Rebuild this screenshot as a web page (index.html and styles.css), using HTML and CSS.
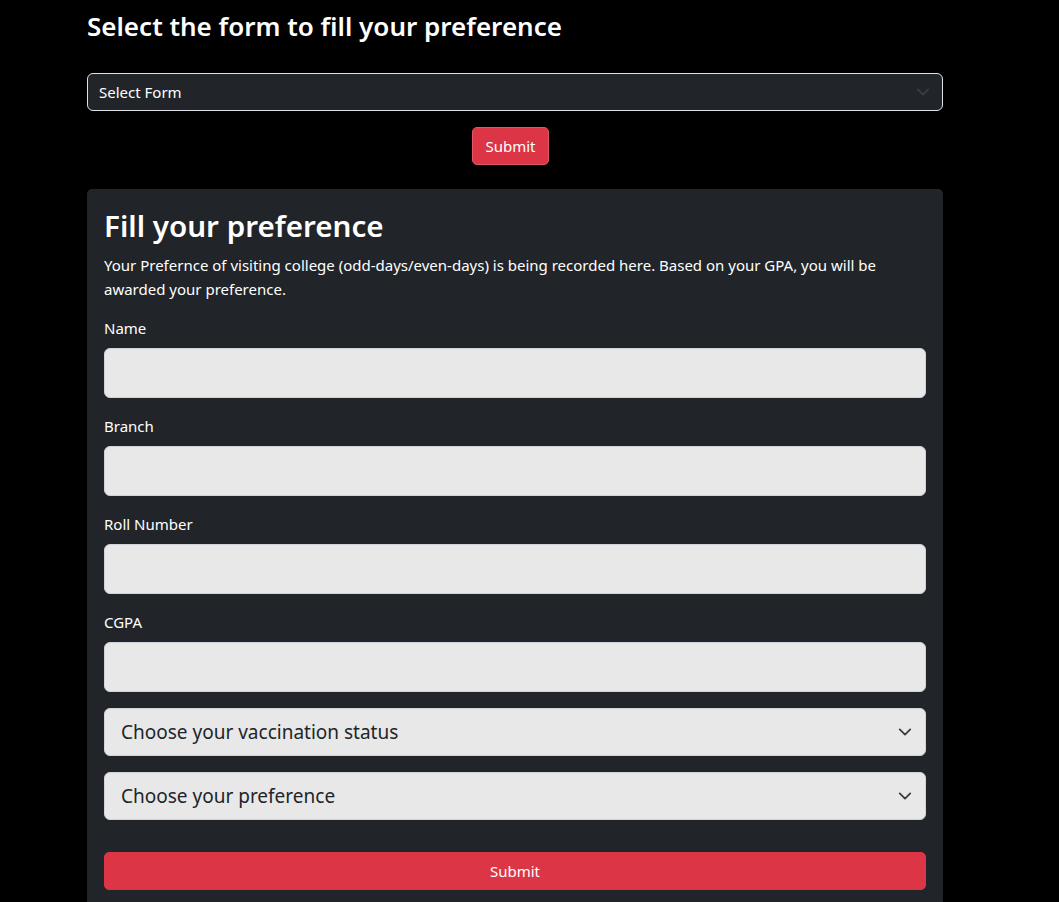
FILE: index.html
```html
<!DOCTYPE html>
<html lang="en">
<head>
<meta charset="utf-8">
<title>Fill your preference</title>
<link rel="stylesheet" href="styles.css">
</head>
<body>
<main class="page">
  <h2 class="page-title">Select the form to fill your preference</h2>
  <div class="form-select-wrap">
    <div class="select-dark">
      <span>Select Form</span>
      <svg class="chev chev-dim" viewBox="0 0 16 16" width="16" height="16"><path d="M2 5l6 6 6-6" fill="none" stroke="currentColor" stroke-width="2" stroke-linecap="round" stroke-linejoin="round"/></svg>
    </div>
  </div>
  <div class="center-row">
    <button class="btn btn-danger">Submit</button>
  </div>

  <section class="card">
    <h1 class="card-title">Fill your preference</h1>
    <p class="lead-text">Your Prefernce of visiting college (odd-days/even-days) is being recorded here. Based on your GPA, you will be awarded your preference.</p>

    <div class="field">
      <label class="label">Name</label>
      <div class="input"></div>
    </div>
    <div class="field">
      <label class="label">Branch</label>
      <div class="input"></div>
    </div>
    <div class="field">
      <label class="label">Roll Number</label>
      <div class="input"></div>
    </div>
    <div class="field">
      <label class="label">CGPA</label>
      <div class="input"></div>
    </div>
    <div class="select-light">
      <span>Choose your vaccination status</span>
      <svg class="chev" viewBox="0 0 16 16" width="16" height="16"><path d="M2 5l6 6 6-6" fill="none" stroke="currentColor" stroke-width="2" stroke-linecap="round" stroke-linejoin="round"/></svg>
    </div>
    <div class="select-light">
      <span>Choose your preference</span>
      <svg class="chev" viewBox="0 0 16 16" width="16" height="16"><path d="M2 5l6 6 6-6" fill="none" stroke="currentColor" stroke-width="2" stroke-linecap="round" stroke-linejoin="round"/></svg>
    </div>
    <button class="btn btn-danger btn-block">Submit</button>
  </section>
</main>
</body>
</html>
```
FILE: styles.css
```css
* { box-sizing: border-box; }
html, body {
  margin: 0;
  background: #000;
  color: #fff;
  font-family: "Noto Sans", "Open Sans", sans-serif;
  font-size: 15px;
  line-height: 24px;
}
.page {
  width: 856px;
  margin-left: 87px;
  padding-top: 8px;
}
.page-title {
  margin: 0 0 29px;
  font-size: 26px;
  line-height: 36px;
  font-weight: 600;
}
.select-dark {
  height: 38px;
  border: 1px solid #dee2e6;
  border-radius: 6px;
  background: #212529;
  display: flex;
  align-items: center;
  justify-content: space-between;
  padding: 0 12px 0 11px;
  font-size: 15px;
  color: #fff;
}
.chev { width: 16px; height: 16px; color: #343a40; }
.chev-dim { color: #3a3f45; width: 14px; height: 14px; }
.center-row {
  display: flex;
  justify-content: center;
  padding: 16px 9px 24px 0;
}
.btn {
  font-family: inherit;
  font-size: 15px;
  line-height: 24px;
  border-radius: 5px;
  padding: 6px 12px;
  color: #fff;
  cursor: pointer;
}
.btn-danger {
  background: #dc3545;
  border: 1px solid #dc3545;
}
.center-row .btn { border-color: #e25563; }
.card {
  background: #212529;
  border-radius: 5px;
  padding: 16px 17px 16px;
}
.card-title {
  margin: 0 0 6px;
  font-size: 29.6px;
  line-height: 42px;
  font-weight: 600;
}
.lead-text {
  margin: 0 0 15px;
}
.field { margin-bottom: 16px; }
.label {
  display: block;
  margin-bottom: 8px;
  line-height: 24px;
}
.input {
  height: 50px;
  background: #e8e8e8;
  border: 1px solid #ced4da;
  border-radius: 6px;
}
.select-light {
  height: 48px;
  margin-bottom: 16px;
  background: #e8e8e8;
  border: 1px solid #ced4da;
  border-radius: 6px;
  display: flex;
  align-items: center;
  justify-content: space-between;
  padding: 0 13px 0 16px;
  font-size: 19px;
  color: #212529;
}
.select-light .chev { color: #343a40; width: 14px; height: 14px; }
.btn-block {
  display: block;
  width: 100%;
  margin-top: 32px;
  height: 38px;
}
```
